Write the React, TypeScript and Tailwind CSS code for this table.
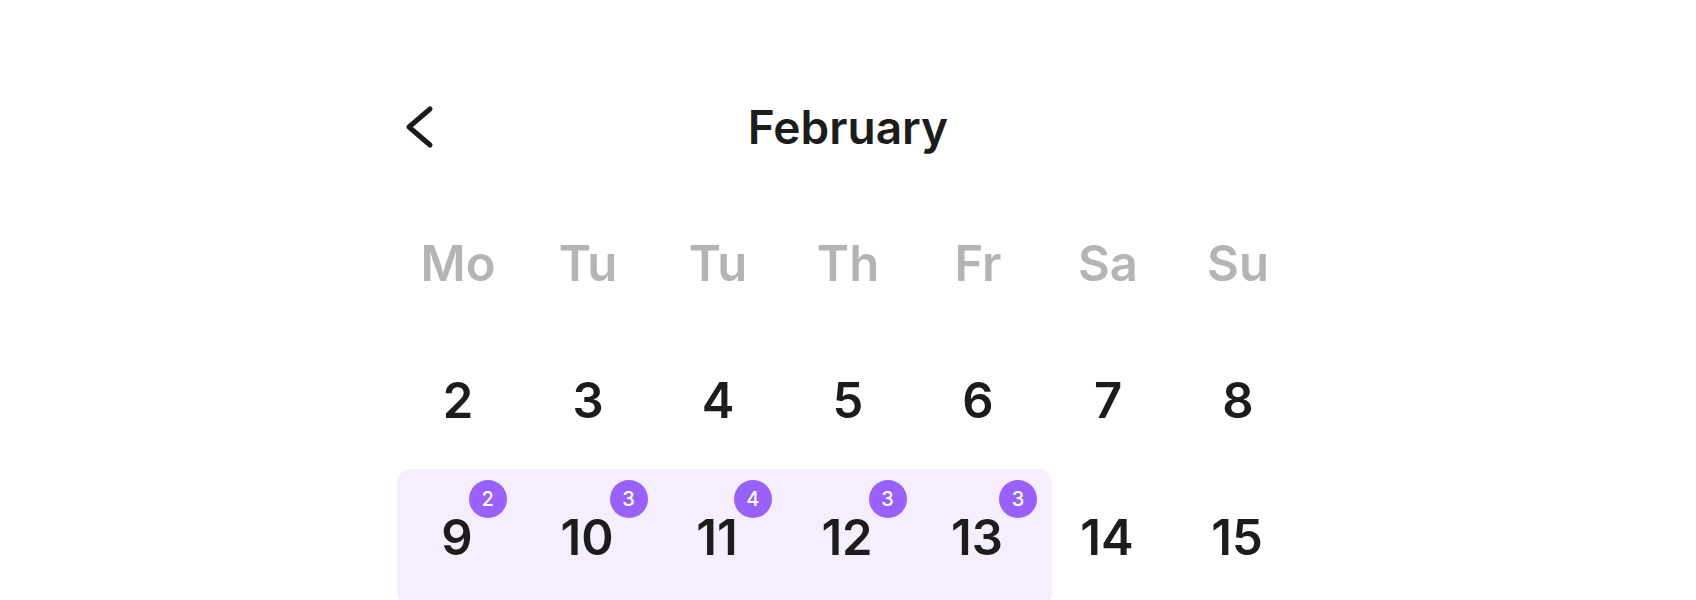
import React from 'react';

type Day = { day: number; count?: number };

const weekdays = ['Mo', 'Tu', 'Tu', 'Th', 'Fr', 'Sa', 'Su'];
const firstWeek: Day[] = [2, 3, 4, 5, 6, 7, 8].map((d) => ({ day: d }));
const busyWeek: Day[] = [
    { day: 9, count: 2 },
    { day: 10, count: 3 },
    { day: 11, count: 4 },
    { day: 12, count: 3 },
    { day: 13, count: 3 },
];
const restWeek: Day[] = [{ day: 14 }, { day: 15 }];

const DayCell: React.FC<{ item: Day }> = ({ item }) => (
    <div className="w-[130px] h-[137px] shrink-0 flex items-center justify-center">
        <span className="relative text-[49px] leading-none font-semibold text-[#1c1c1c]">
            {item.day}
            {item.count !== undefined && (
                <span className="absolute left-[calc(100%-4px)] -top-[33px] w-[38px] h-[38px] rounded-full bg-[#9a60fb] text-white text-[20px] font-medium flex items-center justify-center">
                    {item.count}
                </span>
            )}
        </span>
    </div>
);

const App: React.FC = () => {
    return (
        <div className="min-h-screen bg-white" style={{ fontFamily: 'Inter, "Noto Sans", sans-serif' }}>
            <div className="w-[910px] mx-auto pt-[58px]">
                <div className="h-[137px] flex items-center">
                    <button type="button" className="ml-[12px] w-[29px] h-[44px] shrink-0 flex items-center justify-center" aria-label="Previous month">
                        <svg width="29" height="44" viewBox="0 0 29 44" fill="none" className="shrink-0">
                            <path d="M25 4 L4 22 L25 40" stroke="#1c1c1c" strokeWidth="5" strokeLinecap="round" strokeLinejoin="round" />
                        </svg>
                    </button>
                    <h1 className="flex-1 text-center text-[46px] leading-none font-semibold text-[#1c1c1c]">February</h1>
                    <div className="w-[41px]" />
                </div>

                <div className="grid grid-cols-7">
                    {weekdays.map((w, i) => (
                        <div key={i} className="h-[137px] flex items-center justify-center text-[49px] leading-none font-semibold text-[#b4b4b4]">
                            {w}
                        </div>
                    ))}
                </div>

                <div className="flex">
                    {firstWeek.map((d) => (
                        <DayCell key={d.day} item={d} />
                    ))}
                </div>

                <div className="flex">
                    <div className="ml-[4px] w-[655px] h-[137px] rounded-[14px] bg-[#f5eeff] flex shrink-0">
                        <div className="-ml-[5px] flex">
                            {busyWeek.map((d) => (
                                <DayCell key={d.day} item={d} />
                            ))}
                        </div>
                    </div>
                    <div className="-ml-[10px] flex">
                        {restWeek.map((d) => (
                            <DayCell key={d.day} item={d} />
                        ))}
                    </div>
                </div>
            </div>
        </div>
    );
};

export default App;
